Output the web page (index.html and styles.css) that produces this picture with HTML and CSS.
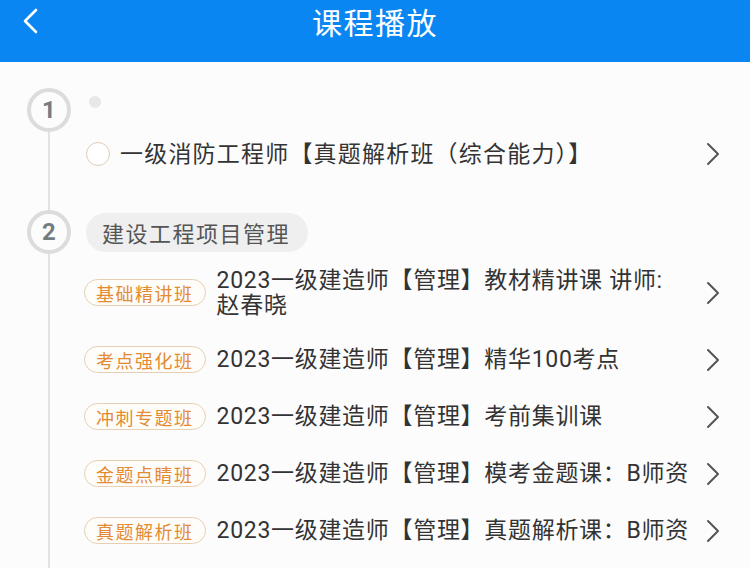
FILE: index.html
```html
<!DOCTYPE html>
<html lang="zh-CN">
<head>
<meta charset="utf-8">
<title>课程播放</title>
<link rel="stylesheet" href="styles.css">
</head>
<body>
<header class="header">
  <svg class="back" width="18" height="26" viewBox="0 0 18 26"><path d="M15 2 L4 13 L15 24" fill="none" stroke="#fff" stroke-width="2.6" stroke-linecap="round" stroke-linejoin="round"/></svg>
  <h1 class="title">课程播放</h1>
</header>
<main class="main">
  <section class="section">
    <div class="step-head">
      <span class="step-num">1</span>
      <span class="dot"></span>
    </div>
    <div class="step-body body-1">
      <div class="row">
        <span class="radio"></span>
        <span class="row-text wide">一级消防工程师【真题解析班（综合能力）】</span>
        <svg class="chev" width="14" height="24" viewBox="0 0 14 24"><path d="M2 2 L12 12 L2 22" fill="none" stroke="#555" stroke-width="2" stroke-linecap="round" stroke-linejoin="round"/></svg>
      </div>
    </div>
  </section>
  <section class="section">
    <div class="step-head">
      <span class="step-num">2</span>
      <span class="pill">建设工程项目管理</span>
    </div>
    <div class="step-body body-2">
      <div class="row row-tall">
        <span class="tag">基础精讲班</span>
        <span class="row-text">2023一级建造师【管理】教材精讲课 讲师:<br>赵春晓</span>
        <svg class="chev" width="14" height="24" viewBox="0 0 14 24"><path d="M2 2 L12 12 L2 22" fill="none" stroke="#555" stroke-width="2" stroke-linecap="round" stroke-linejoin="round"/></svg>
      </div>
      <div class="row">
        <span class="tag">考点强化班</span>
        <span class="row-text">2023一级建造师【管理】精华100考点</span>
        <svg class="chev" width="14" height="24" viewBox="0 0 14 24"><path d="M2 2 L12 12 L2 22" fill="none" stroke="#555" stroke-width="2" stroke-linecap="round" stroke-linejoin="round"/></svg>
      </div>
      <div class="row">
        <span class="tag">冲刺专题班</span>
        <span class="row-text">2023一级建造师【管理】考前集训课</span>
        <svg class="chev" width="14" height="24" viewBox="0 0 14 24"><path d="M2 2 L12 12 L2 22" fill="none" stroke="#555" stroke-width="2" stroke-linecap="round" stroke-linejoin="round"/></svg>
      </div>
      <div class="row">
        <span class="tag">金题点睛班</span>
        <span class="row-text">2023一级建造师【管理】模考金题课：B师资</span>
        <svg class="chev" width="14" height="24" viewBox="0 0 14 24"><path d="M2 2 L12 12 L2 22" fill="none" stroke="#555" stroke-width="2" stroke-linecap="round" stroke-linejoin="round"/></svg>
      </div>
      <div class="row">
        <span class="tag">真题解析班</span>
        <span class="row-text">2023一级建造师【管理】真题解析课：B师资</span>
        <svg class="chev" width="14" height="24" viewBox="0 0 14 24"><path d="M2 2 L12 12 L2 22" fill="none" stroke="#555" stroke-width="2" stroke-linecap="round" stroke-linejoin="round"/></svg>
      </div>
    </div>
  </section>
</main>
</body>
</html>
```

FILE: styles.css
```css
* { box-sizing: border-box; }
html, body { margin: 0; padding: 0; }
body {
  width: 750px;
  height: 568px;
  overflow: hidden;
  background: #fcfcfc;
  font-family: "Roboto", "Noto Sans CJK SC", sans-serif;
  color: #333;
}
.header {
  height: 62px;
  background: #0a86f3;
  display: flex;
  justify-content: center;
  position: relative;
}
.back {
  position: absolute;
  left: 21px;
  top: 8px;
}
.title {
  margin: 0;
  font-family: "Noto Sans CJK SC", sans-serif;
  font-size: 30px;
  font-weight: 400;
  color: #fff;
  line-height: 42px;
  letter-spacing: 1.5px;
}
.main {
  padding-top: 26px;
}
.step-head {
  display: flex;
  align-items: center;
  height: 44px;
}
.step-num {
  width: 44px;
  height: 44px;
  margin-left: 27px;
  border: 4px solid #dcdcdc;
  border-radius: 50%;
  display: flex;
  align-items: center;
  justify-content: center;
  font-family: "Roboto", sans-serif;
  font-weight: 700;
  font-size: 24px;
  color: #757c81;
  flex: none;
}
.dot {
  width: 12px;
  height: 12px;
  border-radius: 50%;
  background: #e8e8e8;
  margin-left: 18px;
  align-self: flex-start;
  margin-top: 8px;
}
.pill {
  margin-left: 15px;
  height: 39px;
  padding: 0 18px 0 16px;
  border-radius: 20px;
  background: #efefef;
  color: #555;
  font-family: "Noto Sans CJK SC", sans-serif;
  font-size: 22px;
  display: flex;
  align-items: center;
  letter-spacing: 1.5px;
}
.step-body {
  margin-left: 48px;
  border-left: 2px solid #e2e2e2;
  padding-left: 34px;
  padding-right: 30px;
}
.body-1 {
  padding-bottom: 34px;
}
.body-1 .row {
  min-height: 44px;
  height: 44px;
}
.body-2 {
  min-height: 330px;
}
.row {
  display: flex;
  align-items: center;
  min-height: 57px;
}
.row-tall {
  min-height: 77px;
}
.row-text {
  flex: 1;
  font-size: 23px;
  line-height: 25px;
  color: #333;
  letter-spacing: 0.7px;
}
.row-text.wide {
  letter-spacing: 1.2px;
}
.radio {
  width: 24px;
  height: 24px;
  border-radius: 50%;
  border: 1.5px solid #ddcdb6;
  background: #fff;
  margin-left: 2px;
  margin-right: 10px;
  flex: none;
}
.tag {
  flex: none;
  height: 27px;
  padding: 0 11px 0 11px;
  border: 1.5px solid #e6cfb2;
  border-radius: 14px;
  color: #e38a33;
  font-family: "Noto Sans CJK SC", sans-serif;
  font-size: 18px;
  letter-spacing: 1.5px;
  display: flex;
  align-items: center;
  margin-right: 11px;
  background: #fffdfa;
}
.chev {
  flex: none;
  margin-left: 10px;
}
```
